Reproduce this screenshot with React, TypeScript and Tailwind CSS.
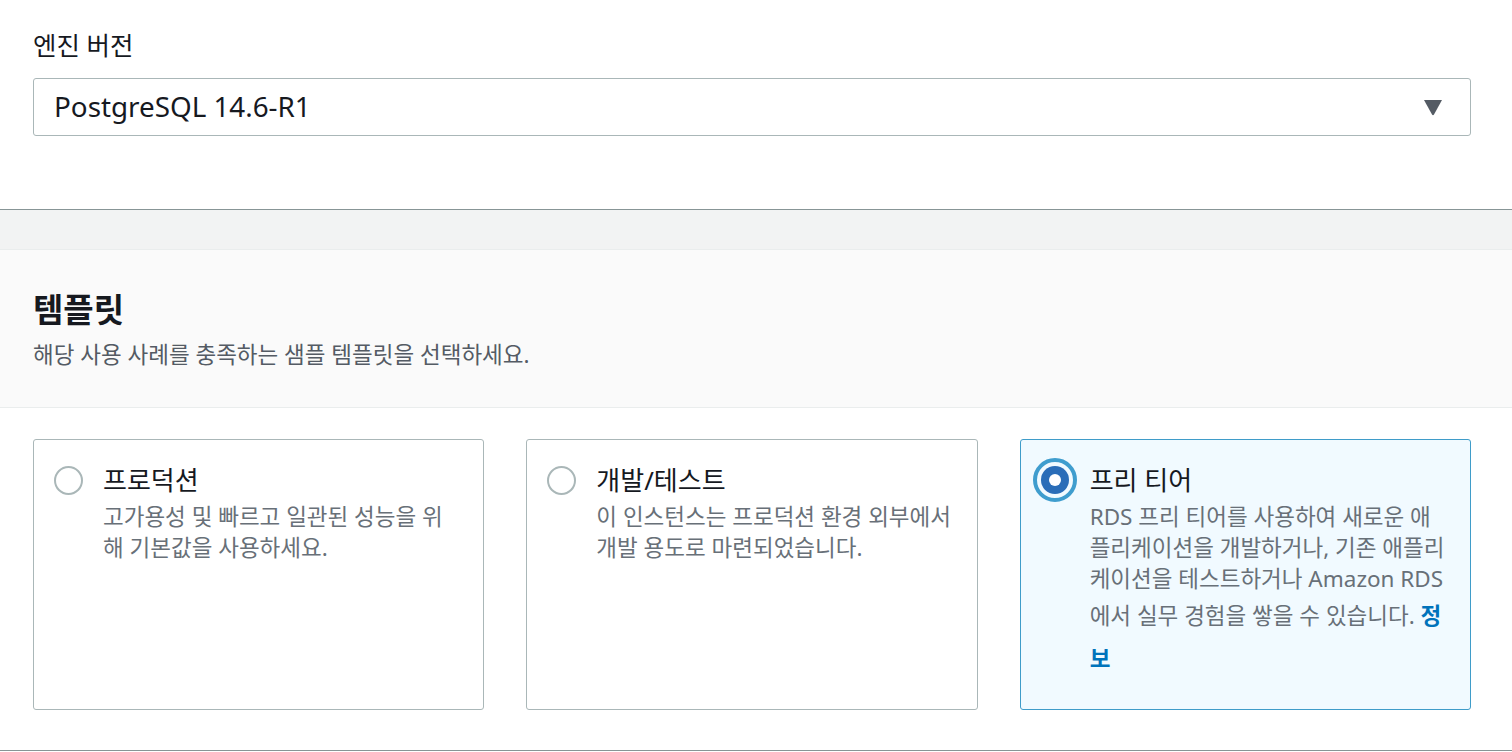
import React from 'react';

const font = { fontFamily: '"Noto Sans", "Noto Sans CJK KR", sans-serif' };

function Radio({ checked }: { checked?: boolean }) {
  if (checked) {
    return (
      <svg width="44" height="44" viewBox="0 0 44 44" className="shrink-0">
        <circle cx="22" cy="22" r="20" fill="none" stroke="#3f9dce" strokeWidth="4" />
        <circle cx="22" cy="22" r="14" fill="#2a6db8" />
        <circle cx="22" cy="22" r="6" fill="#ffffff" />
      </svg>
    );
  }
  return <div className="w-[29px] h-[29px] shrink-0 rounded-full border-2 border-[#aab7b8] bg-white" />;
}

function Tile({
  title,
  checked,
  children,
}: {
  title: string;
  checked?: boolean;
  children: React.ReactNode;
}) {
  return (
    <div
      className={
        checked
          ? 'h-[271px] rounded-[3px] border border-[#3f9cc9] bg-[#f1faff] pt-[19px] pl-[20px] pr-[20px] flex gap-[20px]'
          : 'h-[271px] rounded-[3px] border border-[#aab7b8] bg-white pt-[19px] pl-[20px] pr-[20px] flex gap-[20px]'
      }
    >
      <div className="w-[29px] h-[42px] flex items-center justify-center shrink-0">
        <Radio checked={checked} />
      </div>
      <div className="flex-1 min-w-0">
        <div className="text-[26px] leading-[42px] text-[#16191f]">{title}</div>
        <p className="text-[22.5px] leading-[31px] text-[#687078]">{children}</p>
      </div>
    </div>
  );
}

export default function App() {
  return (
    <div className="w-[1512px] h-[752px] bg-white overflow-hidden" style={font}>
      {/* Engine version */}
      <div className="h-[210px] pl-[33px] pr-[41px] pt-[28px] border-b border-[#879596]">
        <div className="text-[25.5px] leading-[34px] text-[#16191f]">엔진 버전</div>
        <div className="mt-[16px] h-[58px] rounded-[3px] border border-[#aab7b8] bg-white flex items-center pl-[20px] pr-[27px]">
          <span className="flex-1 text-[27.8px] leading-none text-[#16191f]">PostgreSQL 14.6-R1</span>
          <svg width="20" height="17" viewBox="0 0 20 17">
            <path d="M1 1 H19 L11 15.5 Q10 17 9 15.5 Z" fill="#545b64" />
          </svg>
        </div>
      </div>

      <div className="h-[40px] bg-[#f2f3f3] border-b border-[#eaeded]" />

      {/* Templates header */}
      <div className="h-[158px] bg-[#fafafa] border-b border-[#eaeded] pl-[33px] pr-[41px] pt-[38px]">
        <h2 className="text-[33px] leading-[44px] font-bold text-[#16191f]">템플릿</h2>
        <p className="mt-[7px] text-[22.5px] leading-[32px] text-[#545b64]">
          해당 사용 사례를 충족하는 샘플 템플릿을 선택하세요.
        </p>
      </div>

      {/* Tiles */}
      <div className="h-[343px] pl-[33px] pr-[41px] pt-[31px] border-b border-[#879596]">
        <div className="grid grid-cols-3 gap-[42px]">
          <Tile title="프로덕션">고가용성 및 빠르고 일관된 성능을 위해 기본값을 사용하세요.</Tile>
          <Tile title="개발/테스트">이 인스턴스는 프로덕션 환경 외부에서 개발 용도로 마련되었습니다.</Tile>
          <Tile title="프리 티어" checked>
            RDS 프리 티어를 사용하여 새로운 애플리케이션을 개발하거나, 기존 애플리케이션을 테스트하거나 Amazon RDS에서 실무 경험을 쌓을 수 있습니다.{' '}
            <span className="text-[#0073bb] font-bold leading-[43px]">정보</span>
          </Tile>
        </div>
      </div>
    </div>
  );
}
